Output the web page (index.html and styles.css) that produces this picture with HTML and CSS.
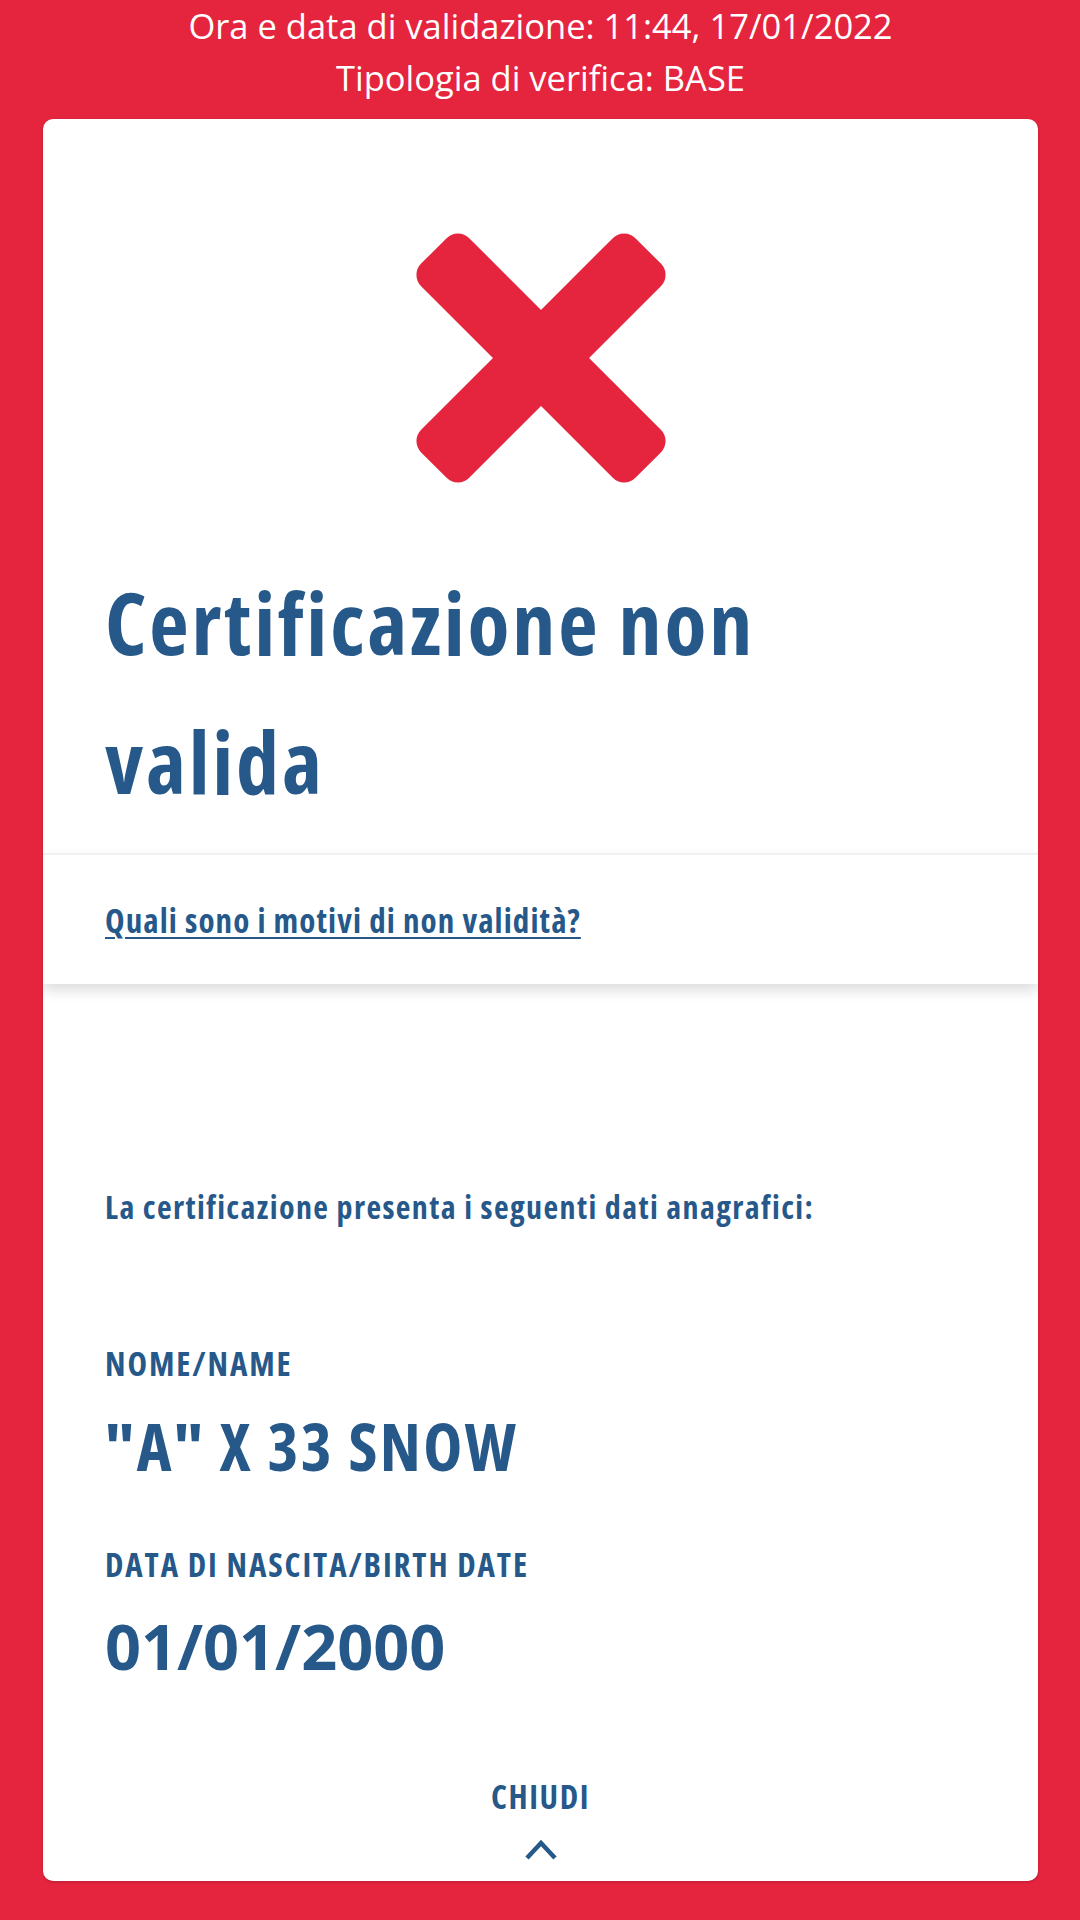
FILE: index.html
```html
<!DOCTYPE html>
<html lang="it">
<head>
<meta charset="utf-8">
<title>Certificazione non valida</title>
<link rel="stylesheet" href="styles.css">
</head>
<body>
  <header class="info">
    <p class="info-line">Ora e data di validazione: 11:44, 17/01/2022</p>
    <p class="info-line">Tipologia di verifica: BASE</p>
  </header>
  <main class="card">
    <section class="result">
      <svg class="result-icon" viewBox="0 0 250 250" aria-hidden="true">
        <rect x="-26.5" y="91" width="303" height="68" rx="16" transform="rotate(45 125 125)"/>
        <rect x="-26.5" y="91" width="303" height="68" rx="16" transform="rotate(-45 125 125)"/>
      </svg>
      <h1 class="result-title">Certificazione non valida</h1>
    </section>
    <section class="reasons">
      <a class="reasons-link" href="#">Quali sono i motivi di non validità?</a>
    </section>
    <section class="details">
      <p class="details-intro">La certificazione presenta i seguenti dati anagrafici:</p>
      <p class="field-label">NOME/NAME</p>
      <p class="field-value">"A" X 33 SNOW</p>
      <p class="field-label field-label-spaced">DATA DI NASCITA/BIRTH DATE</p>
      <p class="field-value field-date">01/01/2000</p>
      <div class="close">
        <span class="close-text">CHIUDI</span>
        <svg class="close-chevron" viewBox="0 0 34 22" aria-hidden="true">
          <polyline points="3,19 17,4 31,19"/>
        </svg>
      </div>
    </section>
  </main>
</body>
</html>
```
FILE: styles.css
```css
html, body {
  margin: 0;
  padding: 0;
}

body {
  width: 1080px;
  height: 1920px;
  background: #e5243e;
  font-family: "Open Sans", "Liberation Sans", sans-serif;
  font-stretch: 75%;
  color: #26598a;
  display: flex;
  flex-direction: column;
  box-sizing: border-box;
  padding: 0 42px 39px 43px;
}

p, h1 {
  margin: 0;
}

.info {
  padding-bottom: 15px;
  text-align: center;
  color: #ffffff;
}

.info-line {
  font-size: 34.5px;
  line-height: 52px;
  font-stretch: 100%;
}

.card {
  flex: 1;
  background: #ffffff;
  border-radius: 10px;
  display: flex;
  flex-direction: column;
  overflow: hidden;
  box-shadow: 0 1px 3px rgba(0, 0, 0, 0.2);
}

.result {
  padding: 114px 62px 23px;
  display: flex;
  flex-direction: column;
}

.result-icon {
  width: 250px;
  height: 250px;
  align-self: center;
  fill: #e5243e;
}

.result-title {
  margin-top: 69px;
  max-width: 760px;
  font-size: 86px;
  line-height: 139px;
  font-weight: 700;
  letter-spacing: 2.8px;
}

.reasons {
  position: relative;
  z-index: 1;
  border-top: 2px solid #f0f0f0;
  padding: 46px 62px 43px;
  box-shadow: 0 7px 12px rgba(0, 0, 0, 0.13);
}

.reasons-link {
  display: block;
  font-size: 33px;
  line-height: 40px;
  font-weight: 700;
  letter-spacing: 1.1px;
  color: #26598a;
  text-decoration: underline;
  text-decoration-thickness: 2px;
  text-underline-offset: 4px;
}

.details {
  flex: 1;
  display: flex;
  flex-direction: column;
  padding: 203px 62px 20px;
}

.details-intro {
  font-size: 32px;
  line-height: 40px;
  font-weight: 700;
  letter-spacing: 1.4px;
}

.field-label {
  margin-top: 117px;
  font-size: 33px;
  line-height: 40px;
  font-weight: 700;
  letter-spacing: 1.9px;
}

.field-label-spaced {
  margin-top: 60px;
}

.field-value {
  margin-top: 21px;
  font-size: 66px;
  line-height: 80px;
  font-weight: 700;
  letter-spacing: 2.4px;
}

.field-date {
  font-size: 63px;
  font-stretch: 100%;
  letter-spacing: 0;
}

.close {
  margin-top: auto;
  display: flex;
  flex-direction: column;
  align-items: center;
  gap: 22px;
}

.close-text {
  font-size: 33px;
  line-height: 40px;
  font-weight: 700;
  letter-spacing: 1.6px;
}

.close-chevron {
  width: 34px;
  height: 22px;
  fill: none;
  stroke: #26598a;
  stroke-width: 4.5;
}
```
